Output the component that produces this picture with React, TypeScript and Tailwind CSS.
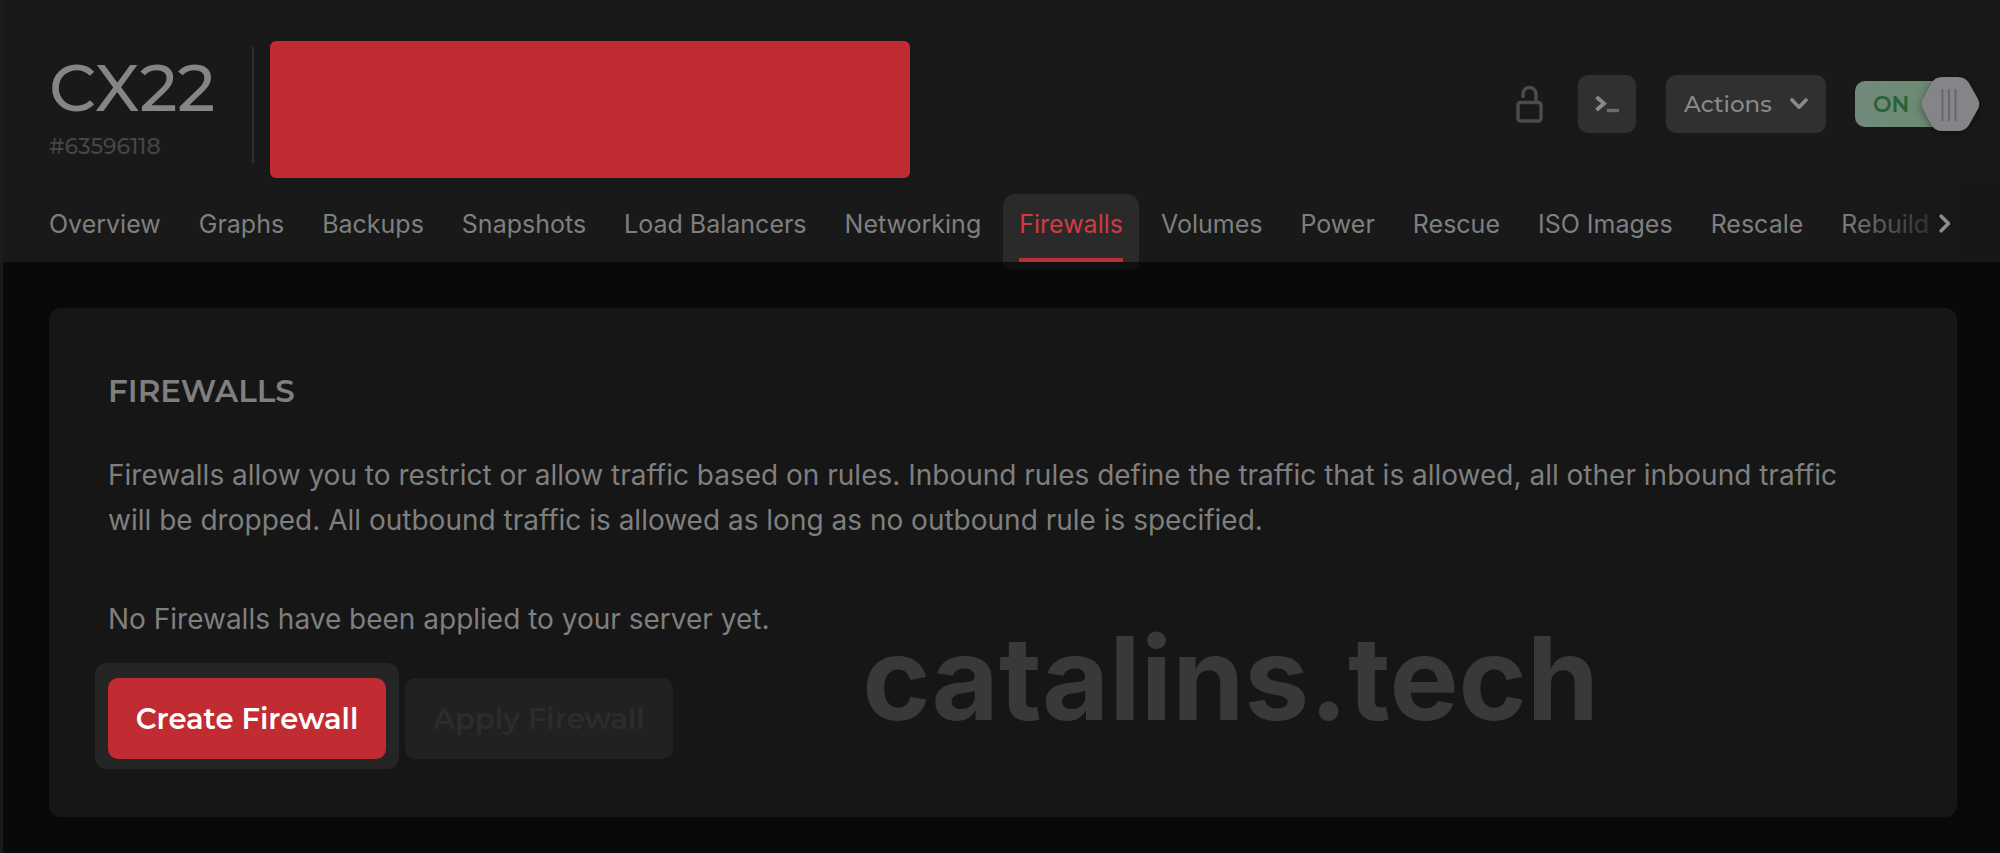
import React from "react";

const tabs = [
  "Overview",
  "Graphs",
  "Backups",
  "Snapshots",
  "Load Balancers",
  "Networking",
  "Firewalls",
  "Volumes",
  "Power",
  "Rescue",
  "ISO Images",
  "Rescale",
  "Rebuild",
];

function LockOpenIcon() {
  return (
    <svg width="28" height="38" viewBox="0 0 28 38" fill="none" stroke="#4c4c4c" strokeWidth="3.4">
      <rect x="2" y="17.5" width="23" height="18.5" rx="2.5" />
      <path d="M7 13V9a6.500 6.500 0 0 1 13 0v8.5" />
    </svg>
  );
}

function TerminalIcon() {
  return (
    <svg width="26" height="18" viewBox="0 0 26 18" fill="none">
      <path d="M2.5 2L10 8.5L2.5 15" stroke="#8a8a8a" strokeWidth="3.8" />
      <path d="M13 15.5H25" stroke="#6c6c6c" strokeWidth="3.4" />
    </svg>
  );
}

function ChevronDown() {
  return (
    <svg width="18" height="12" viewBox="0 0 18 12" fill="none" stroke="#8a8a8a" strokeWidth="3.6" strokeLinecap="round" strokeLinejoin="round">
      <path d="M2 2L9 9.2L16 2" />
    </svg>
  );
}

function ChevronRight() {
  return (
    <svg width="12" height="19" viewBox="0 0 12 19" fill="none" stroke="#8c8c8c" strokeWidth="3.6" strokeLinecap="round" strokeLinejoin="round">
      <path d="M2.2 2.2L9.4 9.5L2.2 16.8" />
    </svg>
  );
}

function PowerSwitch() {
  return (
    <label className="relative flex h-[58px] w-[125px] cursor-pointer items-center">
      <input type="checkbox" role="switch" aria-label="Server power" defaultChecked className="sr-only" />
      <span className="flex h-[46px] w-[93px] items-center rounded-[10px] bg-linear-to-r from-[#71897b] to-[#6b8c70] pl-[18px] font-['Montserrat','Inter',sans-serif] text-[22px] font-semibold text-[#2a6136]">
        ON
      </span>
      <svg className="absolute top-0 right-0 drop-shadow-[0_2px_4px_#00000066]" width="60" height="58" viewBox="0 0 60 58">
        <path
          d="M22 2H38Q45 2 49 8L58 24Q60.500 29 58 34L49 50Q45 56 38 56H22Q15 56 11.500 50L3 34Q0.500 29 3 24L11.500 8Q15 2 22 2Z"
          fill="#858588"
        />
        <path d="M22.500 14V46M29 14V46M35.500 14V46" stroke="#67676d" strokeWidth="2" />
      </svg>
    </label>
  );
}

export default function App() {
  return (
    <div className="flex min-h-screen flex-col border-l-[3px] border-[#1b1b1b] bg-[#090909] font-['Inter',sans-serif] text-[#7f7f7f]">
      <header className="bg-[#191919]">
        <div className="flex items-center pt-[41px] pr-5 pl-[46px]">
          <div className="w-[203px] pb-1">
            <h1 className="mb-[7px] font-['Montserrat','Inter',sans-serif] text-[66px] leading-[72px] font-medium text-[#858585]">CX22</h1>
            <p className="font-['Montserrat','Inter',sans-serif] text-[22px] leading-8 font-medium text-[#464646]">#63596118</p>
          </div>
          <div className="mb-[10px] h-[116px] w-[2px] bg-[#303030]" />
          <div className="ml-4 h-[137px] w-[640px] rounded-md bg-[#c12b32]" />
          <div className="mb-[11px] ml-auto flex items-center">
            <button aria-label="Protection" className="mr-[34px] flex items-center">
              <LockOpenIcon />
            </button>
            <button aria-label="Console" className="mr-[30px] flex h-[58px] w-[58px] items-center justify-center rounded-[10px] bg-[#303030]">
              <TerminalIcon />
            </button>
            <button className="mr-[29px] flex h-[58px] w-[160px] items-center justify-between rounded-[10px] bg-[#303030] px-[18px] font-['Montserrat','Inter',sans-serif] text-[23px] font-medium text-[#8a8a8a]">
              Actions
              <ChevronDown />
            </button>
            <PowerSwitch />
          </div>
        </div>
        <nav aria-label="Server sections" className="relative flex h-[84px] items-start gap-[38px] pt-7 pl-[46px] text-[25px] leading-9 whitespace-nowrap">
          {tabs.map((tab) =>
            tab === "Firewalls" ? (
              <a key={tab} href="#firewalls" aria-current="page" className="relative text-[#d03b43]">
                <span className="absolute -inset-x-4 -top-3 h-[68px] rounded-t-xl bg-[#2a2a2a]">
                  <span className="absolute inset-x-0 top-full block h-2 rounded-b-xl bg-[#101010]" />
                </span>
                <span className="relative block h-14 border-b-4 border-[#bd2f36]">{tab}</span>
              </a>
            ) : (
              <a key={tab} href={`#${tab.toLowerCase().replace(" ", "-")}`}>
                {tab}
              </a>
            ),
          )}
          <div className="absolute top-0 right-0 flex h-full w-40 items-start justify-end bg-linear-to-r from-transparent to-[#171717] to-75% pt-9 pr-[49px]">
            <button aria-label="More sections">
              <ChevronRight />
            </button>
          </div>
        </nav>
      </header>

      <main className="pt-[46px] pr-[43px] pb-9 pl-[46px]">
        <section className="relative rounded-xl bg-[#161616] pt-[60px] pr-20 pb-[58px] pl-[59px] text-[28px] leading-[45px]">
          <h2 className="font-['Montserrat','Inter',sans-serif] text-[31px] leading-[46px] font-semibold">FIREWALLS</h2>
          <p className="mt-[39px]">
            Firewalls allow you to restrict or allow traffic based on rules. Inbound rules define the traffic that is allowed, all other
            inbound traffic will be dropped. All outbound traffic is allowed as long as no outbound rule is specified.
          </p>
          <p className="mt-[54px]">No Firewalls have been applied to your server yet.</p>
          <div className="mt-9 flex gap-[19px] font-['Montserrat','Inter',sans-serif] text-[29px] font-semibold">
            <div className="-mx-[13px] -mt-[15px] -mb-[10px] rounded-xl bg-[#252525] px-[13px] pt-[15px] pb-[10px]">
              <button className="block h-[81px] w-[278px] rounded-[10px] bg-[#c12b32] text-white">Create Firewall</button>
            </div>
            <button disabled className="h-[81px] w-[268px] rounded-[10px] bg-[#212121] text-[#2c2c2c]">
              Apply Firewall
            </button>
          </div>
          <div className="pointer-events-none absolute right-[358px] bottom-[69px] text-[116px] leading-[140px] font-bold text-[#393939]">
            catalins.tech
          </div>
        </section>
      </main>
    </div>
  );
}
